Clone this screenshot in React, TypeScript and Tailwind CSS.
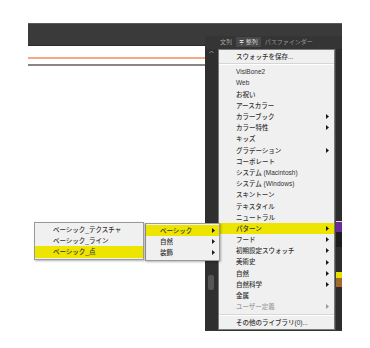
import React from "react";

type Item = { label: string; arrow?: boolean; active?: boolean; disabled?: boolean };

const mainItems: Item[] = [
  { label: "VisiBone2" },
  { label: "Web" },
  { label: "お祝い" },
  { label: "アースカラー" },
  { label: "カラーブック", arrow: true },
  { label: "カラー特性", arrow: true },
  { label: "キッズ" },
  { label: "グラデーション", arrow: true },
  { label: "コーポレート" },
  { label: "システム (Macintosh)" },
  { label: "システム (Windows)" },
  { label: "スキントーン" },
  { label: "テキスタイル" },
  { label: "ニュートラル" },
  { label: "パターン", arrow: true, active: true },
  { label: "フード", arrow: true },
  { label: "初期設定スウォッチ", arrow: true },
  { label: "美術史", arrow: true },
  { label: "自然", arrow: true },
  { label: "自然科学", arrow: true },
  { label: "金属" },
  { label: "ユーザー定義", arrow: true, disabled: true },
];

const patternItems: Item[] = [
  { label: "ベーシック", arrow: true, active: true },
  { label: "自然", arrow: true },
  { label: "装飾", arrow: true },
];

const basicItems: Item[] = [
  { label: "ベーシック_テクスチャ" },
  { label: "ベーシック_ライン" },
  { label: "ベーシック_点", active: true },
];

const Arrow = ({ dim }: { dim?: boolean }) => (
  <svg width="3" height="5" viewBox="0 0 3 5" className="shrink-0">
    <path d="M0 0 L3 2.5 L0 5 Z" fill={dim ? "#9a9a9a" : "#1a1a1a"} />
  </svg>
);

const Row = ({ item, pl, pr }: { item: Item; pl: string; pr: string }) => (
  <div
    className={`flex items-center justify-between h-[11.2px] ${pl} ${pr} ${
      item.active ? "bg-[#ede400]" : ""
    } ${item.disabled ? "text-[#a3a3a3]" : "text-[#333]"}`}
  >
    <span className="whitespace-nowrap">{item.label}</span>
    {item.arrow && <Arrow dim={item.disabled} />}
  </div>
);

const Separator = () => (
  <div className="h-[4.4px] flex flex-col justify-center">
    <div className="h-px bg-[#d6d6d6]" />
    <div className="h-px bg-white" />
  </div>
);

export default function App() {
  return (
    <div
      className="relative w-[370px] h-[348px] bg-white overflow-hidden text-[6.5px] leading-[11.2px] font-medium"
      style={{ fontFamily: '"Liberation Sans", "Noto Sans CJK JP", sans-serif' }}
    >
      <div className="flex ml-[28px] mt-[23px] w-[314px]">
        {/* left work area */}
        <div className="w-[177px] flex flex-col">
          <div className="h-[23px] bg-[#3a3a3a] border-t border-[#5a5a5a] border-b border-b-[#2a2a2a]" />
          <div className="mt-[11px] h-[2px] bg-[#f4a886]" />
          <div className="mt-[5px] h-[2px] bg-[#8c8484]" />
        </div>

        {/* panel */}
        <div className="w-[137px] h-[308px] bg-[#353535] border-t border-[#5a5a5a] flex flex-col">
          <div className="h-[13px] bg-[#3a3a3a]" />
          <div className="h-[11px] flex items-end gap-[3px] pl-[14px] text-[6px] leading-[10px] font-normal">
            <div className="px-[1px] text-[#a8a8a8]">文列</div>
            <div className="px-[3px] bg-[#484848] text-[#dcdcdc]">≑ 整列</div>
            <div className="px-[1px] text-[#9a9a9a]">パスファインダー</div>
          </div>
          <div className="flex flex-1 mt-[2px] mb-[1px]">
            {/* scroll column */}
            <div className="w-[13px] flex flex-col items-center bg-[#2f2f2f]">
              <svg width="5" height="4" viewBox="0 0 5 4" className="mt-[1px]">
                <path d="M0.5 3 L2.5 1 L4.5 3" stroke="#9a9a9a" strokeWidth="0.9" fill="none" />
              </svg>
              <div className="flex-1" />
              <div className="w-[6px] h-[15px] rounded-[2px] bg-[#555] mb-[40px] mr-[2px]" />
            </div>

            {/* main menu */}
            <div className="w-[117px] bg-[#f0f0f0] border border-[#7a7a7a] py-px">
              <Row item={{ label: "スウォッチを保存..." }} pl="pl-[17px]" pr="pr-[5px]" />
              <Separator />
              {mainItems.map((it) => (
                <Row key={it.label} item={it} pl="pl-[17px]" pr="pr-[5px]" />
              ))}
              <Separator />
              <Row item={{ label: "その他のライブラリ(0)..." }} pl="pl-[17px]" pr="pr-[5px]" />
            </div>

            {/* swatch strip */}
            <div className="w-[7px] flex flex-col bg-[#2c2c2c] border-l border-[#444]">
              <div className="h-[172px]" />
              <div className="h-px bg-[#e8d8e8]" />
              <div className="h-[10px] bg-[#6a2a9a]" />
              <div className="h-[15px] bg-[#1c1c1c]" />
              <div className="h-[25px]" />
              <div className="h-[6px] bg-[#e6e000]" />
              <div className="h-[9px] bg-[#a06a2a]" />
            </div>
          </div>
        </div>
      </div>

      {/* submenu: パターン */}
      <div className="absolute left-[145px] top-[223px] w-[75px] bg-[#f0f0f0] border border-[#9a9a9a] py-px shadow-[1px_1px_2px_rgba(0,0,0,0.3)]">
        {patternItems.map((it) => (
          <Row key={it.label} item={it} pl="pl-[14px]" pr="pr-[4px]" />
        ))}
      </div>

      {/* submenu: ベーシック */}
      <div className="absolute left-[34px] top-[222px] w-[110px] bg-[#f0f0f0] border border-[#9a9a9a] py-px shadow-[1px_1px_2px_rgba(0,0,0,0.3)]">
        {basicItems.map((it) => (
          <Row key={it.label} item={it} pl="pl-[18px]" pr="pr-[4px]" />
        ))}
      </div>
    </div>
  );
}
